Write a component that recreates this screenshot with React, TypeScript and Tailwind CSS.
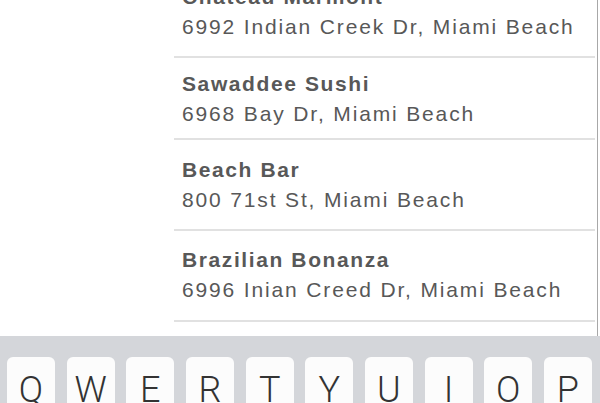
const places = [
  { name: "Chateau Marmont", address: "6992 Indian Creek Dr, Miami Beach", pad: "pt-[14px] pb-[14px]" },
  { name: "Sawaddee Sushi", address: "6968 Bay Dr, Miami Beach", pad: "pt-[11px] pb-[9px]" },
  { name: "Beach Bar", address: "800 71st St, Miami Beach", pad: "pt-[15px] pb-[14px]" },
  { name: "Brazilian Bonanza", address: "6996 Inian Creed Dr, Miami Beach", pad: "pt-[14px] pb-[15px]" },
];

const keys = ["Q", "W", "E", "R", "T", "Y", "U", "I", "O", "P"];

export default function App() {
  return (
    <div className="w-[600px] h-[403px] overflow-hidden bg-white flex flex-col font-['Liberation_Sans',Arial,sans-serif]">
      {/* Results list */}
      <div className="h-[336px] flex shrink-0 overflow-hidden">
        <div className="w-[174px] shrink-0" />
        <div className="w-[424px] shrink-0 border-r border-[#a8a8a8] pr-[2px]">
          <div className="-mt-[32px]">
            {places.map((p) => (
              <div key={p.name} className={`pl-[8px] border-b-2 border-[#e1e1e1] ${p.pad}`}>
                <div className="text-[21px] leading-[30px] font-bold tracking-[1.6px] text-[#585858]">
                  {p.name}
                </div>
                <div className="text-[21px] leading-[30px] tracking-[1.85px] text-[#585858]">
                  {p.address}
                </div>
              </div>
            ))}
          </div>
        </div>
      </div>

      {/* Keyboard */}
      <div className="flex-1 bg-[#d4d6da] pt-[21px] pl-[7px] pr-[8px]">
        <div className="flex justify-between">
          {keys.map((k) => (
            <div
              key={k}
              className="w-[48px] h-[60px] rounded-[6px] bg-[#fcfcfc] pt-[15px] text-center font-['Roboto',sans-serif] text-[36px] leading-[36px] font-light text-[#333]"
            >
              {k}
            </div>
          ))}
        </div>
      </div>
    </div>
  );
}
